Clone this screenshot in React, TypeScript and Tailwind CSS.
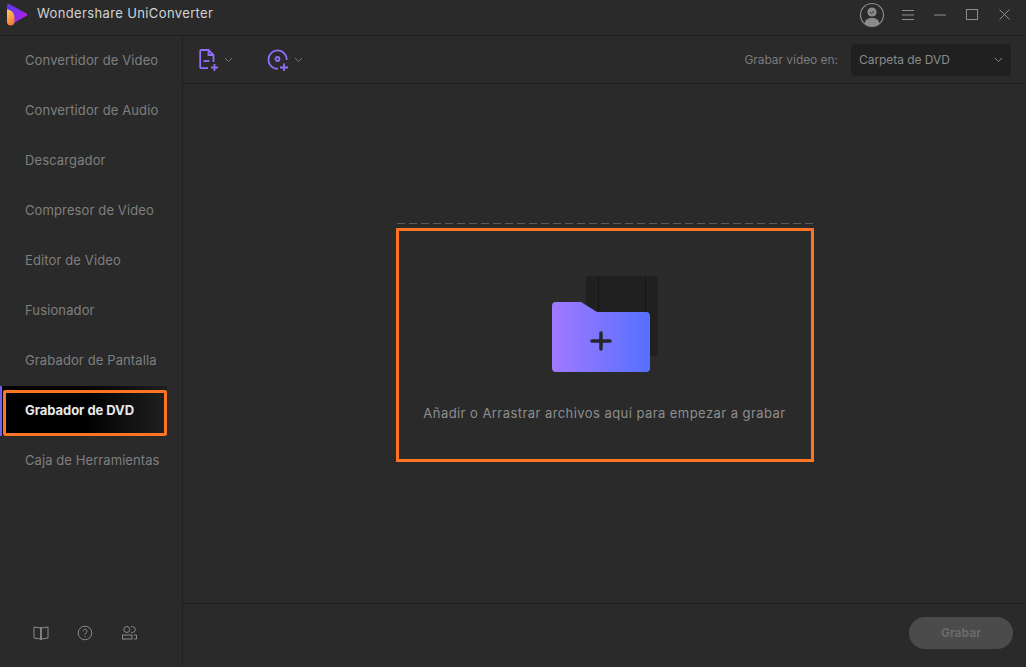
import React from "react";

const nav = [
  "Convertidor de Video",
  "Convertidor de Audio",
  "Descargador",
  "Compresor de Video",
  "Editor de Video",
  "Fusionador",
  "Grabador de Pantalla",
];

function Logo() {
  return (
    <svg width="22" height="23" viewBox="0 0 22 23" className="ml-[6px]">
      <defs>
        <linearGradient id="lg1" x1="0" y1="0" x2="1" y2="0.6">
          <stop offset="0" stopColor="#4f3df5" />
          <stop offset="1" stopColor="#b020e6" />
        </linearGradient>
        <linearGradient id="lg2" x1="0" y1="0" x2="0.4" y2="1">
          <stop offset="0" stopColor="#ffd05a" />
          <stop offset="1" stopColor="#f47a3c" />
        </linearGradient>
      </defs>
      <path d="M1 2.500C1 1 2.400 .6 3.600 1.200L20.500 10.400C21.500 11 21.500 12.200 20.500 12.800L8 20L8 14C8 10 5 7.500 1 7Z" fill="url(#lg1)" />
      <path d="M1 6.500C5.500 7 8.500 10 8.500 14.500L8.500 19C8.500 21.500 6.500 22.500 4.500 22.500C2.500 22.500 1 21 1 19Z" fill="url(#lg2)" />
    </svg>
  );
}

function Chevron({ className = "" }: { className?: string }) {
  return (
    <svg width="9" height="6" viewBox="0 0 9 6" fill="none" stroke="currentColor" strokeWidth="1" className={className}>
      <path d="M1 1l3.500 3.500L8 1" />
    </svg>
  );
}

function AddFileIcon() {
  return (
    <svg width="20" height="22" viewBox="0 0 20 22" fill="none" stroke="#8f6ff8" strokeWidth="1.800">
      <path d="M9 19.200H2.200a1 1 0 0 1-1-1V2a1 1 0 0 1 1-1h7.300l5 5v7" />
      <path d="M9.500 1v5h5" />
      <path d="M4.500 12h6" />
      <path d="M12 18.500h7M15.500 15v7" />
    </svg>
  );
}

function AddDiscIcon() {
  return (
    <svg width="22" height="22" viewBox="0 0 22 22" fill="none" stroke="#8f6ff8" strokeWidth="1.800">
      <path d="M11 19.800A9.200 9.200 0 1 1 19.800 11" />
      <circle cx="10.500" cy="10" r="2" />
      <path d="M13 18.500h8M17 14.500v7.500" />
    </svg>
  );
}

function FolderArt() {
  return (
    <div className="relative w-[108px] h-[97px]">
      <div className="absolute left-[34px] top-0 w-[72px] h-[80px] rounded-[4px] bg-[#202020] flex">
        <div className="ml-[12px] w-[1px] h-full bg-[#151515]" />
        <div className="ml-[46px] w-[1px] h-full bg-[#151515]" />
      </div>
      <svg width="98" height="70" viewBox="0 0 98 70" className="absolute left-0 top-[26px]">
        <defs>
          <linearGradient id="fg" x1="0" y1="0" x2="1" y2="0">
            <stop offset="0" stopColor="#a179ff" />
            <stop offset="1" stopColor="#5570ff" />
          </linearGradient>
        </defs>
        <path d="M4 0H29L45 10H94a4 4 0 0 1 4 4V66a4 4 0 0 1-4 4H4a4 4 0 0 1-4-4V4a4 4 0 0 1 4-4Z" fill="url(#fg)" />
        <path d="M49 31V47M40 39H58" stroke="#26262b" strokeWidth="3.500" strokeLinecap="round" />
      </svg>
    </div>
  );
}

export default function App() {
  return (
    <div
      className="w-[1026px] h-[667px] bg-[#2a2a2a] text-[#7f7f7f] flex flex-col overflow-hidden relative"
      style={{ fontFamily: "Inter, 'Liberation Sans', sans-serif" }}
    >
      {/* title bar */}
      <header className="h-[36px] shrink-0 border-b border-[#202020] flex items-center">
        <div className="-mt-[7px]"><Logo /></div>
        <span className="ml-[9px] -mt-[7px] text-[13px] tracking-[0.37px] text-[#d3d3d3]">Wondershare UniConverter</span>
        <div className="ml-auto -mt-[6px] flex items-center text-[#8c8c8c]">
          <svg width="26" height="26" viewBox="0 0 26 26" fill="none">
            <circle cx="13" cy="13" r="11.500" stroke="#8a8a8a" strokeWidth="1.200" />
            <circle cx="13" cy="10" r="4.600" fill="#8a8a8a" />
            <path d="M11 10l1.600 1.600L15.200 9" stroke="#2a2a2a" strokeWidth="1" />
            <path d="M5.500 22c.5-4.500 3.500-6 7.500-6s7 1.500 7.500 6c-2 1.500-4.500 2.500-7.500 2.500s-5.500-1-7.500-2.500Z" fill="#8a8a8a" />
          </svg>
          <svg width="12" height="10" viewBox="0 0 12 10" stroke="currentColor" strokeWidth="1" className="ml-[17px]">
            <path d="M0 .5h12M0 5h12M0 9.500h12" />
          </svg>
          <svg width="12" height="2" viewBox="0 0 12 2" stroke="currentColor" strokeWidth="1" className="ml-[20px]">
            <path d="M0 1h12" />
          </svg>
          <svg width="12" height="11" viewBox="0 0 12 11" fill="none" stroke="currentColor" strokeWidth="1" className="ml-[20px]">
            <rect x=".5" y=".5" width="11" height="10" />
          </svg>
          <svg width="11" height="11" viewBox="0 0 11 11" stroke="currentColor" strokeWidth="1" className="ml-[21px] mr-[16px]">
            <path d="M.5.5l10 10M10.500.5l-10 10" />
          </svg>
        </div>
      </header>

      <div className="flex flex-1 min-h-0">
        {/* sidebar */}
        <aside className="w-[183px] shrink-0 border-r border-[#202020] flex flex-col">
          {nav.map((n) => (
            <div key={n} className="h-[50px] flex items-center pl-[25px] text-[13px] tracking-[0.12px]">
              {n}
            </div>
          ))}
          <div
            className="w-[167px] h-[50px] flex items-center pl-[25px] text-[13px] font-bold text-[#e8e8e8] border-l-[2px] border-[#7a5cf0] relative"
            style={{ backgroundImage: "linear-gradient(90deg,#000 0%,#000 50%,#202020 100%)" }}
          >
            <span className="-ml-[2px] tracking-[-0.05px]">Grabador de DVD</span>
            <div className="absolute left-[1px] top-[4px] w-[164px] h-[46px] border-[3px] border-[#ff7324] rounded-[2px]" />
          </div>
          <div className="h-[50px] flex items-center pl-[25px] text-[13px] tracking-[0.08px]">Caja de Herramientas</div>
          <div className="mt-auto h-[64px] flex items-center pl-[33px] text-[#8a8a8a] pb-[4px]">
            <svg width="16" height="14" viewBox="0 0 16 14" fill="none" stroke="currentColor" strokeWidth="1">
              <path d="M7.500 2L1 1v11l6.500 1M8.500 2L15 1v11l-6.500 1" />
              <path d="M8 1v13" strokeWidth="1.800" />
            </svg>
            <svg width="16" height="16" viewBox="0 0 16 16" fill="none" stroke="currentColor" strokeWidth="1" className="ml-[28px]">
              <circle cx="8" cy="8" r="6.800" />
              <path d="M6 6.300a2 2 0 1 1 3.200 1.600C8.400 8.500 8 8.800 8 9.800" />
              <path d="M8 11v1.200" />
            </svg>
            <svg width="15" height="14" viewBox="0 0 15 14" fill="none" stroke="currentColor" strokeWidth="1" className="ml-[29px]">
              <circle cx="4.800" cy="3.500" r="3" />
              <path d="M9 .8a3 3 0 1 1 0 5.400" />
              <rect x=".5" y="9" width="9.500" height="4" />
              <path d="M12 9h2.500v4H12" />
            </svg>
          </div>
        </aside>

        {/* main */}
        <main className="flex-1 min-w-0 flex flex-col">
          <div className="h-[48px] shrink-0 border-b border-[#202020] flex items-center pl-[16px] pr-[15px]">
            <AddFileIcon />
            <Chevron className="ml-[5px] text-[#777]" />
            <div className="ml-[34px]"><AddDiscIcon /></div>
            <Chevron className="ml-[5px] text-[#777]" />
            <span className="ml-auto text-[12px] tracking-[-0.05px] text-[#7b7b7b]">Grabar vídeo en:</span>
            <div className="ml-[13px] w-[160px] h-[32px] rounded-[4px] bg-[#202020] flex items-center pl-[8px] pr-[8px] text-[12px] tracking-[-0.05px] text-[#8a8a8a]">
              Carpeta de DVD
              <Chevron className="ml-auto text-[#888]" />
            </div>
          </div>

          <div className="flex-1 min-h-0 flex items-start justify-center pt-[139px]">
            <div className="relative w-[416px] h-[238px] flex flex-col items-center pt-[53px]">
              <div className="absolute left-0 top-0 w-full h-px bg-[repeating-linear-gradient(90deg,#5a5a5a_0,#5a5a5a_8px,transparent_8px,transparent_12px)]" />
              <div className="absolute left-0 bottom-0 w-full h-px bg-[repeating-linear-gradient(90deg,#5a5a5a_0,#5a5a5a_8px,transparent_8px,transparent_12px)]" />
              <div className="absolute -left-[1px] top-[5px] w-[418px] h-[234px] border-[3px] border-[#ff7324]" />
              <div className="ml-[2px]"><FolderArt /></div>
              <p className="mt-[31px] text-[13px] text-[#8e8e8e] tracking-[0.44px]">
                Añadir o Arrastrar archivos aquí para empezar a grabar
              </p>
            </div>
          </div>

          <div className="h-[64px] shrink-0 border-t border-[#202020] flex items-center justify-end pr-[13px] pb-[6px]">
            <div className="w-[104px] h-[32px] rounded-full bg-[#4b4b4b] flex items-center justify-center text-[12px] font-bold text-[#6a6a6a]">
              Grabar
            </div>
          </div>
        </main>
      </div>
    </div>
  );
}
